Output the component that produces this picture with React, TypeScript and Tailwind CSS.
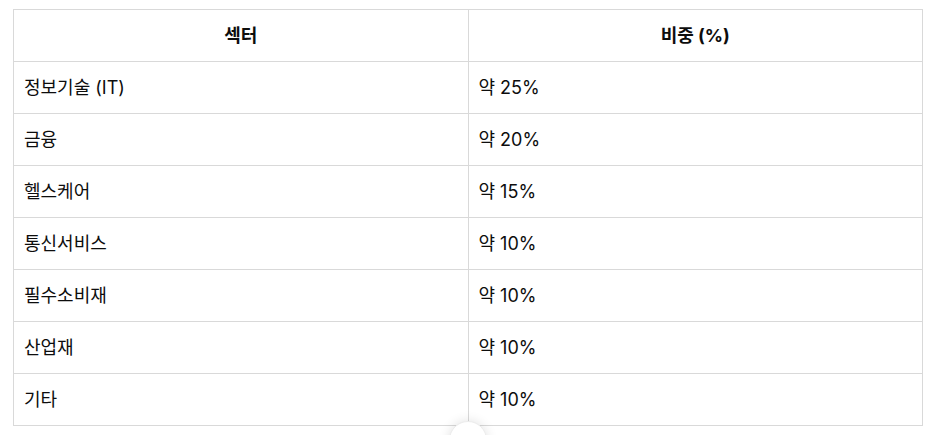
import React from "react";

const rows: [string, string][] = [
  ["정보기술 (IT)", "약 25%"],
  ["금융", "약 20%"],
  ["헬스케어", "약 15%"],
  ["통신서비스", "약 10%"],
  ["필수소비재", "약 10%"],
  ["산업재", "약 10%"],
  ["기타", "약 10%"],
];

const App = () => {
  return (
    <div
      className="relative w-[938px] h-[435px] overflow-hidden bg-white text-[#0d0d0d]"
      style={{ fontFamily: 'Inter, "Noto Sans CJK KR", sans-serif' }}
    >
      <div className="pt-[9px] pl-[13px]">
        <table className="w-[910px] table-fixed border-collapse text-[18px]">
          <thead>
            <tr className="h-[52px]">
              <th className="border border-[#d9d9d9] px-3 text-center font-bold">섹터</th>
              <th className="border border-[#d9d9d9] px-3 text-center font-bold">비중 (%)</th>
            </tr>
          </thead>
          <tbody>
            {rows.map(([sector, weight]) => (
              <tr key={sector} className="h-[52px]">
                <td className="border border-[#d9d9d9] pl-[10px] pr-3">{sector}</td>
                <td className="border border-[#d9d9d9] pl-[10px] pr-3">{weight}</td>
              </tr>
            ))}
          </tbody>
        </table>
      </div>

      {/* scroll-down button */}
      <div className="absolute left-[449px] top-[421px] w-[38px] h-[38px] rounded-full bg-white border border-[#ececec] shadow-[0_0_12px_rgba(0,0,0,0.12)]" />
    </div>
  );
};

export default App;
